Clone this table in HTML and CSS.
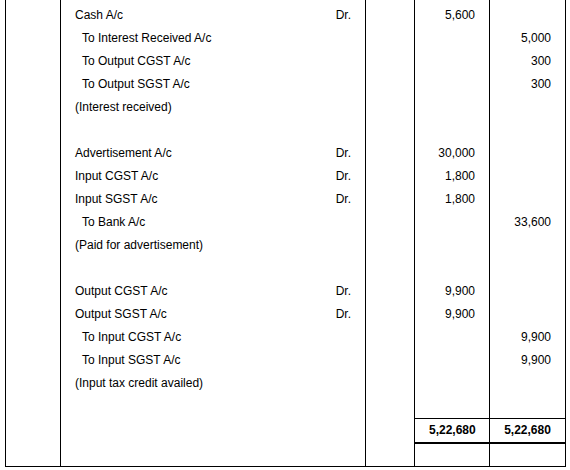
FILE: index.html
```html
<!DOCTYPE html>
<html lang="en">
<head>
  <meta charset="UTF-8" />
  <title>Journal Entries - GST</title>
  <meta name="viewport" content="width=device-width, initial-scale=1.0" />
  <link rel="stylesheet" href="styles.css">
</head>
<body>
  <!-- Journal (lanjutan dari halaman sebelumnya) -->
  <table class="journal">
    <colgroup>
      <col class="c-date">
      <col class="c-part">
      <col class="c-lf">
      <col class="c-amt">
      <col class="c-amt2">
    </colgroup>
    <tbody>
      <tr class="first"><td></td><td>Cash A/c <span class="dr">Dr.</span></td><td></td><td class="num">5,600</td><td></td></tr>
      <tr><td></td><td class="to">To Interest Received A/c</td><td></td><td></td><td class="num">5,000</td></tr>
      <tr><td></td><td class="to">To Output CGST A/c</td><td></td><td></td><td class="num">300</td></tr>
      <tr><td></td><td class="to">To Output SGST A/c</td><td></td><td></td><td class="num">300</td></tr>
      <tr><td></td><td>(Interest received)</td><td></td><td></td><td></td></tr>
      <tr><td></td><td></td><td></td><td></td><td></td></tr>

      <tr><td></td><td>Advertisement A/c <span class="dr">Dr.</span></td><td></td><td class="num">30,000</td><td></td></tr>
      <tr><td></td><td>Input CGST A/c <span class="dr">Dr.</span></td><td></td><td class="num">1,800</td><td></td></tr>
      <tr><td></td><td>Input SGST A/c <span class="dr">Dr.</span></td><td></td><td class="num">1,800</td><td></td></tr>
      <tr><td></td><td class="to">To Bank A/c</td><td></td><td></td><td class="num">33,600</td></tr>
      <tr><td></td><td>(Paid for advertisement)</td><td></td><td></td><td></td></tr>
      <tr><td></td><td></td><td></td><td></td><td></td></tr>

      <tr><td></td><td>Output CGST A/c <span class="dr">Dr.</span></td><td></td><td class="num">9,900</td><td></td></tr>
      <tr><td></td><td>Output SGST A/c <span class="dr">Dr.</span></td><td></td><td class="num">9,900</td><td></td></tr>
      <tr><td></td><td class="to">To Input CGST A/c</td><td></td><td></td><td class="num">9,900</td></tr>
      <tr><td></td><td class="to">To Input SGST A/c</td><td></td><td></td><td class="num">9,900</td></tr>
      <tr><td></td><td>(Input tax credit availed)</td><td></td><td></td><td></td></tr>
      <tr><td></td><td></td><td></td><td></td><td></td></tr>

      <tr class="total"><td></td><td></td><td></td><td class="sum">5,22,680</td><td class="sum">5,22,680</td></tr>
      <tr class="last"><td></td><td></td><td></td><td></td><td></td></tr>
    </tbody>
  </table>
</body>
</html>
```

FILE: styles.css
```css
/* Tata letak dasar */
body {
  margin: 0;
  padding: 0 0 0 5px;
  background: #fff;
  color: #000;
  font-family: "Liberation Sans", Arial, sans-serif;
  font-size: 12px;
}
.journal {
  border-collapse: collapse;
  table-layout: fixed;
  width: 561px;
  border-bottom: 1px solid #000;
}
.c-date { width: 55px; }
.c-part { width: 305px; }
.c-lf { width: 49px; }
.c-amt { width: 75px; }
.c-amt2 { width: 76px; }

.journal td {
  border-left: 1px solid #000;
  border-right: 1px solid #000;
  height: 23px;
  line-height: 23px;
  padding: 0 14px;
  white-space: nowrap;
}
.journal td:nth-child(2) { padding-left: 14px; }
.journal td.to { padding-left: 21px; }
.dr { float: right; }
.num { text-align: right; }

/* Baris pertama terpotong di atas */
.first td { height: 27px; vertical-align: bottom; }

/* Baris total */
.total td { height: 23px; line-height: 23px; }
.total td.sum {
  border-top: 1px solid #000;
  border-bottom: 2px solid #000;
  font-weight: bold;
  text-align: center;
}
.last td { height: 22px; }
```
